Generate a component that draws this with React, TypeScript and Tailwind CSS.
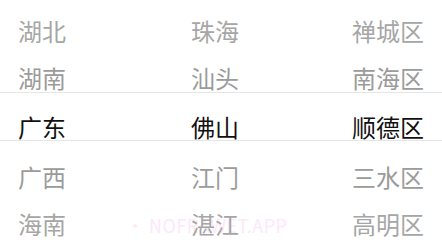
import React from 'react';

type Row = { a: string; b: string; c: string; h: string; tone: string };

const rows: Row[] = [
  { a: '湖北', b: '珠海', c: '禅城区', h: 'h-[48px]', tone: 'text-[#a6a6a6]' },
  { a: '湖南', b: '汕头', c: '南海区', h: 'h-[46px]', tone: 'text-[#9b9b9b]' },
  { a: '广东', b: '佛山', c: '顺德区', h: 'h-[52px]', tone: 'text-[#111111]' },
  { a: '广西', b: '江门', c: '三水区', h: 'h-[48px]', tone: 'text-[#9b9b9b]' },
  { a: '海南', b: '湛江', c: '高明区', h: 'h-[46px]', tone: 'text-[#a6a6a6]' },
];

const App: React.FC = () => {
  return (
    <div
      className="relative w-[442px] h-[248px] overflow-hidden bg-white"
      style={{ fontFamily: '"Noto Sans CJK SC", "Noto Sans", sans-serif' }}
    >
      {/* watermark */}
      <div className="absolute left-[126px] top-[212px] text-[18px] leading-[26px] text-[#fce8f7] tracking-[0.5px]">
        • NOFRAWET.APP
      </div>

      {/* selection lines */}
      <div className="absolute left-0 right-0 top-[92px] h-[49px] border-y border-[#e6e6e6]" />

      <div className="relative flex flex-col pt-[7px]">
        {rows.map((r) => (
          <div key={r.a} className={`flex items-center text-[24px] leading-none ${r.h} ${r.tone}`}>
            <div className="w-[191px] pl-[18px]">{r.a}</div>
            <div className="flex-1">{r.b}</div>
            <div className="pr-[18px] text-right">{r.c}</div>
          </div>
        ))}
      </div>
    </div>
  );
};

export default App;
